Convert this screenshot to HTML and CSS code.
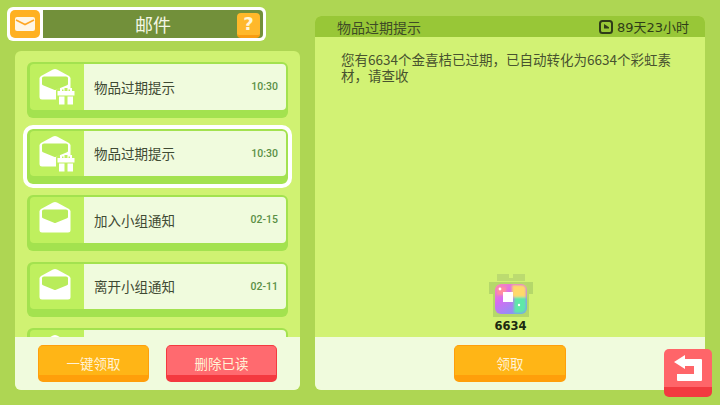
FILE: index.html
```html
<!DOCTYPE html>
<html lang="zh">
<head>
<meta charset="utf-8">
<title>邮件</title>
<link rel="stylesheet" href="styles.css">
</head>
<body>
<svg class="defs" width="0" height="0" aria-hidden="true">
  <symbol id="env" viewBox="0 0 34 32">
    <path d="M1.5 10.5 Q1.5 9 3 8 L15 1.5 Q17 0.6 19 1.5 L31 8 Q32.5 9 32.5 10.5 V29 Q32.5 31.5 30 31.5 H4 Q1.5 31.5 1.5 29 Z" fill="#fff"/>
    <path d="M4 10 Q4 8.5 6 8.5 H28 Q30 8.5 30 10 V16 Q30 17 29 17.3 L18 21.8 Q17 22.2 16 21.8 L5 17.3 Q4 17 4 16 Z" fill="#b9ec5a"/>
  </symbol>
  <symbol id="gift" viewBox="0 0 20 20">
    <rect x="0" y="2" width="20" height="18" rx="3" fill="#bff05e"/>
    <path d="M4 2 H8.5 V5 H11.5 V2 H16 V5 H18.5 V9.5 H11.5 H8.5 H1.5 V5 H4 Z M6 3.5 V5 H7.5 V3.5 Z M12.5 3.5 V5 H14 V3.5 Z" fill="#fff" fill-rule="evenodd"/>
    <path d="M3 10.5 H8.5 V18.5 H3 Z M11.5 10.5 H17 V18.5 H11.5 Z" fill="#fff"/>
  </symbol>
</svg>
<main class="screen">
  <section class="left">
    <header class="titlebar">
      <span class="mailbtn">
        <svg width="20" height="14" viewBox="0 0 20 14"><rect width="20" height="14" rx="2" fill="#fff6e6"/><path d="M1 3 L10 7.5 L19 3" fill="none" stroke="#ffa726" stroke-width="1.6"/></svg>
      </span>
      <h1 class="title">邮件</h1>
      <span class="help">?</span>
    </header>
    <div class="listpanel">
      <ul class="list">
        <li class="row">
          <span class="rowicon"><svg class="env" width="34" height="32"><use href="#env"/></svg><svg class="gift" width="20" height="20"><use href="#gift"/></svg></span>
          <span class="rowbody"><span class="rowtitle">物品过期提示</span><time class="rowtime">10:30</time></span>
        </li>
        <li class="row selected">
          <span class="rowicon"><svg class="env" width="34" height="32"><use href="#env"/></svg><svg class="gift" width="20" height="20"><use href="#gift"/></svg></span>
          <span class="rowbody"><span class="rowtitle">物品过期提示</span><time class="rowtime">10:30</time></span>
        </li>
        <li class="row">
          <span class="rowicon"><svg class="env" width="34" height="32"><use href="#env"/></svg></span>
          <span class="rowbody"><span class="rowtitle">加入小组通知</span><time class="rowtime">02-15</time></span>
        </li>
        <li class="row">
          <span class="rowicon"><svg class="env" width="34" height="32"><use href="#env"/></svg></span>
          <span class="rowbody"><span class="rowtitle">离开小组通知</span><time class="rowtime">02-11</time></span>
        </li>
        <li class="row">
          <span class="rowicon"><svg class="env" width="34" height="32"><use href="#env"/></svg></span>
          <span class="rowbody"></span>
        </li>
      </ul>
      <footer class="listfoot">
        <button class="btn orange">一键领取</button>
        <button class="btn red">删除已读</button>
      </footer>
    </div>
  </section>
  <section class="detail">
    <header class="dhead">
      <span class="dtitle">物品过期提示</span>
      <span class="dtimer">
        <svg width="14" height="14" viewBox="0 0 14 14"><rect x="1" y="1" width="12" height="12" rx="2.5" fill="none" stroke="#2f3c18" stroke-width="2"/><path d="M5 4 L10 7.2 V8.5 H5 Z" fill="#2f3c18"/></svg>
        89天23小时
      </span>
    </header>
    <div class="dbody">
      <p class="msg">您有6634个金喜桔已过期，已自动转化为6634个彩虹素材，请查收</p>
      <div class="reward">
        <svg width="46" height="46" viewBox="0 0 46 46">
          <defs>
            <filter id="soft" x="-10%" y="-10%" width="120%" height="120%"><feGaussianBlur stdDeviation="1.2"/></filter>
            <linearGradient id="rb" x1="0" y1="0" x2="0.7" y2="1">
              <stop offset="0" stop-color="#ff86b4"/><stop offset=".45" stop-color="#d56cf2"/><stop offset="1" stop-color="#7f9af5"/>
            </linearGradient>
          </defs>
          <path d="M9 1 H21 V5 H25 V1 H37 V8 H9 Z" fill="#bcdb70"/>
          <path d="M1 9 H45 V21 H41 V44 H5 V21 H1 Z" fill="#b5d86a"/>
          <rect x="7" y="11" width="32" height="30" rx="6" fill="url(#rb)"/>
          <g filter="url(#soft)">
            <path d="M24 12 H34 Q38 12 38 16 V24 H24 Z" fill="#ffd96a"/>
            <path d="M26 24 H38 V34 Q38 40 32 40 H26 Z" fill="#5fe8a8"/>
            <path d="M9 14 H18 V22 H9 Z" fill="#ff8f9f"/>
          </g>
          <rect x="15" y="19" width="10" height="10" fill="#fff"/>
          <circle cx="12" cy="16" r="1.4" fill="#fff"/>
          <circle cx="31" cy="32" r="1.2" fill="#fff"/>
        </svg>
        <span class="count">6634</span>
      </div>
    </div>
    <footer class="dfoot">
      <button class="btn orange">领取</button>
    </footer>
  </section>
  <button class="back" aria-label="返回">
    <svg width="28" height="26" viewBox="0 0 28 26"><path d="M0 7 L11 0 V4 H27 Q28 4 28 5 V25 Q28 26 27 26 H4 Q3 26 3 25 V19 H20 V11 H11 V14 Z" fill="#fff"/></svg>
  </button>
</main>
</body>
</html>
```
FILE: styles.css
```css
* { box-sizing: border-box; margin: 0; padding: 0; }
html, body { width: 720px; height: 405px; overflow: hidden; }
body {
  background: #aed653;
  font-family: "Noto Sans CJK SC", "Liberation Sans", sans-serif;
  color: #3c4a2a;
}
.defs { display: block; height: 0; }
.screen {
  position: relative;
  width: 720px;
  height: 405px;
  display: flex;
  gap: 15px;
  padding: 7px 8px 15px 7px;
}
.left { width: 293px; display: flex; flex-direction: column; gap: 10px; }

.titlebar {
  width: 259px;
  height: 34px;
  flex: none;
  display: flex;
  align-items: center;
  background: #fff;
  border-radius: 6px;
  padding: 3px;
  gap: 3px;
}
.mailbtn {
  width: 30px; height: 28px;
  flex: none;
  background: #ffb122;
  border-radius: 5px;
  display: flex; align-items: center; justify-content: center;
}
.title {
  flex: 1;
  height: 28px;
  background: #72903a;
  border-radius: 0 4px 4px 0;
  color: #f4f7e4;
  font-size: 18px;
  font-weight: 400;
  line-height: 28px;
  text-align: center;
}
.help {
  position: absolute;
  left: 237px; top: 13px;
  width: 23px; height: 25px;
  background: #ffb82a;
  border-bottom: 3px solid #f89c10;
  border-radius: 4px;
  color: #fff6d8;
  font: 700 18px/22px "DejaVu Sans", sans-serif;
  text-align: center;
}

.listpanel {
  margin-left: 8px;
  width: 285px;
  height: 339px;
  background: #d0f272;
  border-radius: 6px;
  position: relative;
  overflow: hidden;
  padding: 11px 12px 0;
}
.list { list-style: none; display: flex; flex-direction: column; gap: 11px; }
.row {
  height: 55.5px;
  flex: none;
  display: flex;
  background: #a3e24f;
  border-radius: 6px;
  padding: 2px 2px 8px 3px;
}
.row.selected { outline: 4px solid #fff; }
.rowicon {
  width: 54px;
  flex: none;
  background: #bff05e;
  border-radius: 4px 0 0 4px;
  position: relative;
}
.env { position: absolute; left: 8px; top: 4px; }
.gift { position: absolute; left: 26px; top: 22px; }
.rowbody {
  flex: 1;
  display: flex;
  align-items: center;
  justify-content: space-between;
  background: #f0fbdd;
  border-radius: 0 4px 4px 0;
  padding: 0 8px 0 10px;
}
.rowtitle { font-size: 13.5px; color: #3f4a33; }
.rowtime {
  font: 500 10.5px Roboto, sans-serif;
  color: #5a8f45;
}

.listfoot {
  position: absolute;
  left: 0; right: 0; bottom: 0;
  height: 53px;
  background: #f0fbdd;
  display: flex;
  justify-content: center;
  gap: 17px;
  padding-top: 8px;
}
.btn {
  width: 111px;
  height: 37px;
  border-radius: 5px;
  color: #fff3d8;
  font: 400 13.5px "Noto Sans CJK SC", sans-serif;
  padding-top: 5px;
  border-style: solid;
  border-width: 1px 1px 7px;
}
.orange { background: #ffb516; border-color: #ff9f0a; }
.red { background: #ff6a6f; border-color: #f4393f; }
.dfoot .btn { width: 112px; }

.detail {
  width: 390px;
  display: flex;
  flex-direction: column;
  margin-top: 9px;
  border-radius: 6px;
  overflow: hidden;
  background: #d2f274;
}
.dhead {
  height: 21px;
  flex: none;
  background: #98c737;
  display: flex;
  align-items: center;
  justify-content: space-between;
  padding: 0 16px 0 22px;
}
.dtitle { font-size: 14px; color: #3e4b26; }
.dtimer {
  display: flex; align-items: center; gap: 4px;
  font: 400 13px "DejaVu Sans", "Noto Sans CJK SC", sans-serif;
  color: #2f3c18;
}
.dbody { flex: 1; display: flex; flex-direction: column; justify-content: space-between; align-items: center; padding: 14px 26px 0; }
.msg { font-size: 13.5px; line-height: 16px; color: #48532f; align-self: flex-start; width: 332px; }
.reward { display: flex; flex-direction: column; align-items: center; margin-bottom: 5px; margin-left: 1px; }
.reward svg { display: block; }
.count { font: 700 11.5px/12px "DejaVu Sans", sans-serif; color: #1c2a10; margin-top: 1px; }
.dfoot {
  height: 53px;
  flex: none;
  background: #f0fbdd;
  display: flex;
  justify-content: center;
  padding-top: 8px;
}
.back {
  position: absolute;
  left: 664px; top: 349px;
  width: 48px; height: 48px;
  border: 0;
  border-radius: 5px;
  background: #ff6569;
  border-bottom: 10px solid #f23a40;
  display: flex; align-items: center; justify-content: center;
}
```
